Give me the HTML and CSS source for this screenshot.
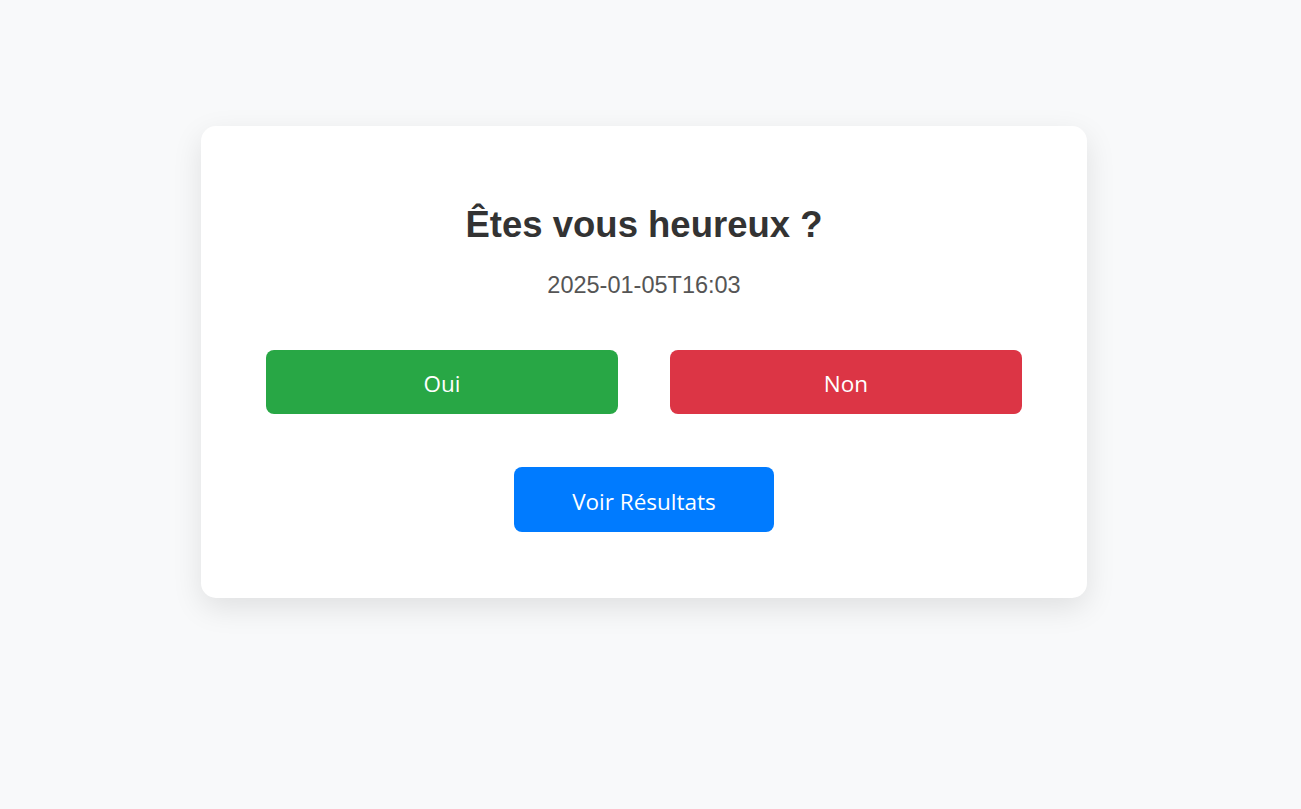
FILE: index.html
```html
<!DOCTYPE html>
<html lang="fr">
<head>
<meta charset="utf-8">
<title>Sondage</title>
<link rel="stylesheet" href="styles.css">
</head>
<body>
<main class="page">
  <section class="card">
    <h1 class="title">Êtes vous heureux ?</h1>
    <p class="date">2025-01-05T16:03</p>
    <div class="choices">
      <button class="btn btn-yes">Oui</button>
      <button class="btn btn-no">Non</button>
    </div>
    <div class="results">
      <button class="btn btn-results">Voir Résultats</button>
    </div>
  </section>
</main>
</body>
</html>
```
FILE: styles.css
```css
html, body {
  margin: 0;
  padding: 0;
  background: #f8f9fa;
  font-family: "Liberation Sans", Arial, sans-serif;
}
.page {
  display: flex;
  justify-content: center;
  align-items: flex-start;
  padding: 126px 13px 0 0;
  min-height: 809px;
  box-sizing: border-box;
}
.card {
  width: 886px;
  box-sizing: border-box;
  background: #fff;
  border-radius: 15px;
  box-shadow: 0 10px 30px rgba(0, 0, 0, 0.1);
  padding: 79px 65px 66px;
  text-align: center;
}
.title {
  margin: 0;
  font-size: 36.5px;
  line-height: 40px;
  font-weight: bold;
  color: #333;
}
.date {
  margin: 26px 0 0;
  font-size: 23.5px;
  line-height: 28px;
  color: #555;
}
.choices {
  display: flex;
  gap: 52px;
  margin-top: 51px;
}
.choices .btn {
  flex: 1;
}
.results {
  display: flex;
  justify-content: center;
  margin-top: 53px;
}
.btn {
  border: none;
  border-radius: 8px;
  height: 64px;
  color: #fff;
  font-family: "Open Sans", "Noto Sans", sans-serif;
  font-size: 22.5px;
  font-weight: 400;
  cursor: pointer;
  padding: 3px 0 0;
  box-sizing: border-box;
}
.btn-yes { background: #28a745; }
.btn-no { background: #dc3545; }
.btn-results {
  background: #007bff;
  width: 260px;
  height: 65px;
}
```
